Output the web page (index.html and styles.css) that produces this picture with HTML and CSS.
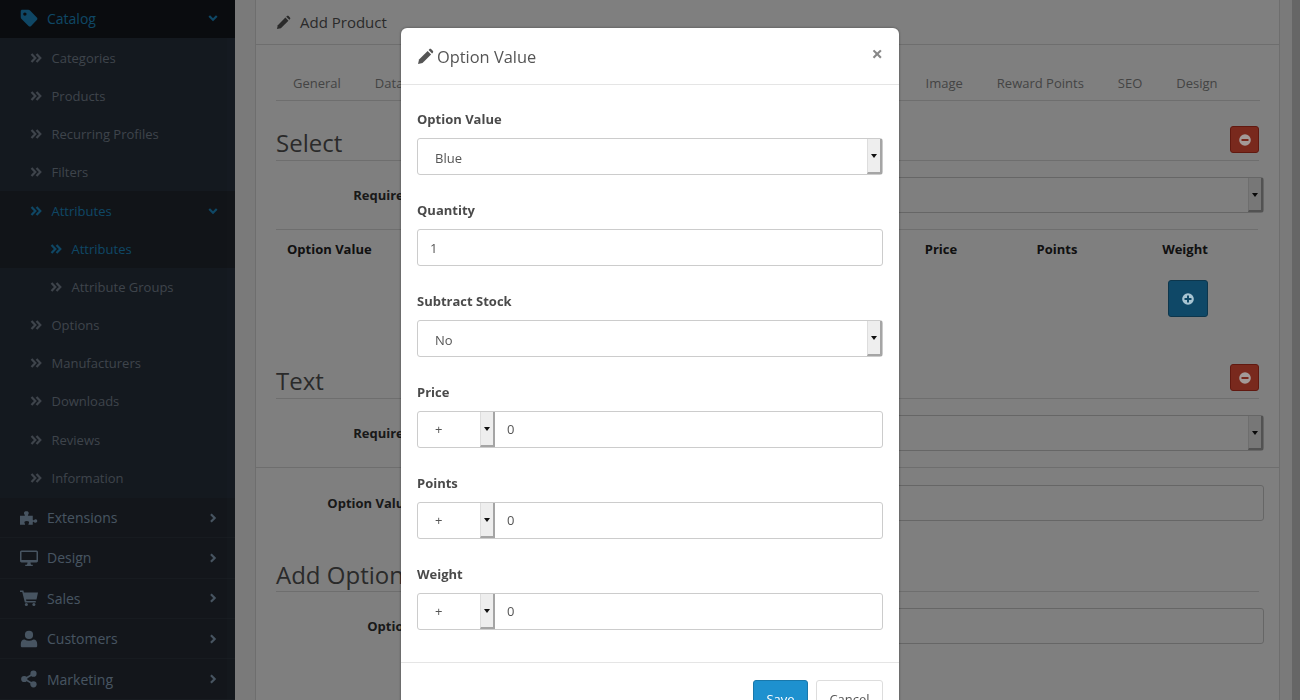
FILE: index.html
```html
<!DOCTYPE html>
<html lang="en">

<head>
    <meta charset="UTF-8">
    <title>Add Product</title>
    <link rel="stylesheet" href="styles.css">
</head>

<body>

    <!-- Icon set -->
    <svg class="icon-defs" xmlns="http://www.w3.org/2000/svg">
        <symbol id="i-tag" viewBox="0 0 24 24"><path fill-rule="evenodd" d="M3 1h8c1 0 1.700.4 2.400 1.100l9 9.300c1 1 1 2.400 0 3.400l-7.600 7.700c-1 1-2.400 1-3.400 0l-9.300-9.100C1.400 12.700 1 12 1 11V3c0-1.200.8-2 2-2zm3.500 3.500a2.300 2.300 0 1 0 0 4.600 2.300 2.300 0 0 0 0-4.600z"/></symbol>
        <symbol id="i-down" viewBox="0 0 12 12"><path d="M1.500 3.500 6 8l4.500-4.500" fill="none" stroke="currentColor" stroke-width="2.600"/></symbol>
        <symbol id="i-right" viewBox="0 0 12 12"><path d="M3.500 1.500 8 6l-4.500 4.500" fill="none" stroke="currentColor" stroke-width="2.600"/></symbol>
        <symbol id="i-double" viewBox="0 0 12 12"><path d="M1.500 2 5.300 6 1.500 10M6.500 2l3.800 4-3.800 4" fill="none" stroke="currentColor" stroke-width="2.200"/></symbol>
        <symbol id="i-puzzle" viewBox="0 0 24 20"><path d="M0 7h5.500C6.500 7 6.800 6 6 5.200 4.800 4 5 1 8.500 1s3.700 3 2.500 4.200C10.200 6 10.500 7 11.500 7H17v5c0 1 1 1.300 1.800.5 1.200-1.200 4.200-1 4.200 1.500s-3 2.700-4.200 1.500C18 14.700 17 15 17 16v3h-5c-1 0-1-1-.3-1.800.9-1.200.6-3.200-2.700-3.200s-3.600 2-2.700 3.200C7 18 7 19 6 19H0z"/></symbol>
        <symbol id="i-desktop" viewBox="0 0 24 22"><path fill-rule="evenodd" d="M2 1h20c1 0 2 1 2 2v12c0 1-1 2-2 2h-8c0 1.300.3 2.300 1 3h2v1.500H7V20h2c.7-.7 1-1.700 1-3H2c-1 0-2-1-2-2V3c0-1 1-2 2-2zm0 2v10.500h20V3z"/></symbol>
        <symbol id="i-cart" viewBox="0 0 24 22"><path d="M0 1h4.500l.7 2.500H24l-2 9.500H8l.5 2H21v2H6.500L3 3H0z"/><circle cx="8.500" cy="19.500" r="2"/><circle cx="18.500" cy="19.500" r="2"/></symbol>
        <symbol id="i-user" viewBox="0 0 20 22"><circle cx="10" cy="6" r="5"/><path d="M1 21c-.6 0-1-.4-1-1v-3c0-3 1.500-5.500 4.500-5.500 3.400 2 7.600 2 11 0 3 0 4.500 2.500 4.500 5.500v3c0 .6-.4 1-1 1z"/></symbol>
        <symbol id="i-share" viewBox="0 0 20 22"><path d="M15.500 4.500 4.500 11l11 6.500" fill="none" stroke="currentColor" stroke-width="2"/><circle cx="15.500" cy="4.500" r="3.800"/><circle cx="4.200" cy="11" r="3.800"/><circle cx="15.500" cy="17.500" r="3.800"/></symbol>
        <symbol id="i-pencil" viewBox="0 0 24 24"><path d="M1.500 22.500l1.400-6.300L15 4.100l4.900 4.900L7.800 21.100z"/><path d="M16.400 2.700l1-1c.8-.8 2-.8 2.800 0l2.100 2.100c.8.800.8 2 0 2.800l-1 1z"/></symbol>
        <symbol id="i-minus" viewBox="0 0 24 24"><path fill-rule="evenodd" d="M12 2a10 10 0 1 0 0 20 10 10 0 0 0 0-20zM6 10.300h12v3.400H6z"/></symbol>
        <symbol id="i-plus" viewBox="0 0 24 24"><path fill-rule="evenodd" d="M12 2a10 10 0 1 0 0 20 10 10 0 0 0 0-20zM10.300 6h3.400v4.300H18v3.400h-4.300V18h-3.400v-4.300H6v-3.400h4.300z"/></symbol>
    </svg>

    <!-- Sidebar -->
    <nav class="sidebar">
        <ul class="menu">
            <li class="menu-item menu-open">
                <svg class="menu-icon"><use href="#i-tag"/></svg>
                <span class="menu-text">Catalog</span>
                <svg class="menu-caret"><use href="#i-down"/></svg>
            </li>
            <li class="sub-list">
                <div class="sub-item"><svg class="sub-icon"><use href="#i-double"/></svg>Categories</div>
                <div class="sub-item"><svg class="sub-icon"><use href="#i-double"/></svg>Products</div>
                <div class="sub-item"><svg class="sub-icon"><use href="#i-double"/></svg>Recurring Profiles</div>
                <div class="sub-item"><svg class="sub-icon"><use href="#i-double"/></svg>Filters</div>
                <div class="sub-item sub-open"><svg class="sub-icon"><use href="#i-double"/></svg>Attributes<svg class="menu-caret"><use href="#i-down"/></svg></div>
                <div class="sub-item sub-open sub-deep"><svg class="sub-icon"><use href="#i-double"/></svg>Attributes</div>
                <div class="sub-item sub-deep"><svg class="sub-icon"><use href="#i-double"/></svg>Attribute Groups</div>
                <div class="sub-item"><svg class="sub-icon"><use href="#i-double"/></svg>Options</div>
                <div class="sub-item"><svg class="sub-icon"><use href="#i-double"/></svg>Manufacturers</div>
                <div class="sub-item"><svg class="sub-icon"><use href="#i-double"/></svg>Downloads</div>
                <div class="sub-item"><svg class="sub-icon"><use href="#i-double"/></svg>Reviews</div>
                <div class="sub-item"><svg class="sub-icon"><use href="#i-double"/></svg>Information</div>
            </li>
            <li class="menu-item">
                <svg class="menu-icon"><use href="#i-puzzle"/></svg>
                <span class="menu-text">Extensions</span>
                <svg class="menu-caret"><use href="#i-right"/></svg>
            </li>
            <li class="menu-item">
                <svg class="menu-icon"><use href="#i-desktop"/></svg>
                <span class="menu-text">Design</span>
                <svg class="menu-caret"><use href="#i-right"/></svg>
            </li>
            <li class="menu-item">
                <svg class="menu-icon"><use href="#i-cart"/></svg>
                <span class="menu-text">Sales</span>
                <svg class="menu-caret"><use href="#i-right"/></svg>
            </li>
            <li class="menu-item">
                <svg class="menu-icon"><use href="#i-user"/></svg>
                <span class="menu-text">Customers</span>
                <svg class="menu-caret"><use href="#i-right"/></svg>
            </li>
            <li class="menu-item">
                <svg class="menu-icon"><use href="#i-share"/></svg>
                <span class="menu-text">Marketing</span>
                <svg class="menu-caret"><use href="#i-right"/></svg>
            </li>
        </ul>
    </nav>

    <!-- Page behind the dialog -->
    <main class="content">
        <div class="panel">
            <div class="panel-heading">
                <svg class="panel-icon"><use href="#i-pencil"/></svg>
                Add Product
            </div>
            <div class="panel-body">
                <ul class="tabs">
                    <li>General</li>
                    <li>Data</li>
                    <li>Links</li>
                    <li>Attribute</li>
                    <li>Option</li>
                    <li>Recurring</li>
                    <li>Discount</li>
                    <li>Special</li>
                    <li class="tab-image">Image</li>
                    <li>Reward Points</li>
                    <li>SEO</li>
                    <li>Design</li>
                </ul>

                <h2 class="legend">Select<span class="btn-remove"><svg class="btn-icon"><use href="#i-minus"/></svg></span></h2>
                <div class="form-row">
                    <label class="row-label">Required</label>
                    <div class="field row-field"><span class="value">Yes</span><span class="arrow"></span></div>
                </div>
                <div class="value-table">
                    <span>Option Value</span>
                    <span>Quantity</span>
                    <span>Subtract Stock</span>
                    <span class="col-center">Price</span>
                    <span class="col-center">Points</span>
                    <span class="col-center">Weight</span>
                </div>
                <div class="table-actions">
                    <span class="btn-add"><svg class="btn-icon"><use href="#i-plus"/></svg></span>
                </div>

                <h2 class="legend legend-text">Text<span class="btn-remove"><svg class="btn-icon"><use href="#i-minus"/></svg></span></h2>
                <div class="form-row">
                    <label class="row-label">Required</label>
                    <div class="field row-field"><span class="value">Yes</span><span class="arrow"></span></div>
                </div>
                <div class="panel-divider"></div>
                <div class="form-row form-row-value">
                    <label class="row-label">Option Value</label>
                    <div class="field row-field"></div>
                </div>

                <h2 class="legend legend-add">Add Option</h2>
                <div class="form-row">
                    <label class="row-label">Option</label>
                    <div class="field row-field"></div>
                </div>
            </div>
        </div>
        <div class="scroll-strip"></div>
    </main>

    <!-- Dialog -->
    <div class="backdrop"></div>
    <div class="modal">
        <div class="modal-header">
            <h4 class="modal-title"><svg class="title-icon"><use href="#i-pencil"/></svg>Option Value</h4>
            <span class="modal-close">×</span>
        </div>
        <div class="modal-body">
            <div class="form-group">
                <label>Option Value</label>
                <div class="field"><span class="value value-select">Blue</span><span class="arrow"></span></div>
            </div>
            <div class="form-group">
                <label>Quantity</label>
                <div class="field"><span class="value value-input value-qty">1</span></div>
            </div>
            <div class="form-group">
                <label>Subtract Stock</label>
                <div class="field"><span class="value value-select">No</span><span class="arrow"></span></div>
            </div>
            <div class="form-group">
                <label>Price</label>
                <div class="field"><span class="prefix">+<span class="arrow"></span></span><span class="value value-input">0</span></div>
            </div>
            <div class="form-group">
                <label>Points</label>
                <div class="field"><span class="prefix">+<span class="arrow"></span></span><span class="value value-input">0</span></div>
            </div>
            <div class="form-group">
                <label>Weight</label>
                <div class="field"><span class="prefix">+<span class="arrow"></span></span><span class="value value-input">0</span></div>
            </div>
        </div>
        <div class="modal-footer">
            <button class="btn btn-save">Save</button>
            <button class="btn btn-cancel">Cancel</button>
        </div>
    </div>

</body>

</html>
```

FILE: styles.css
```css
html, body {
    height: 700px;
    margin: 0;
    overflow: hidden;
}

body {
    display: flex;
    background: #fff;
    color: #666;
    font-family: "Open Sans", sans-serif;
    font-size: 13px;
}

ul {
    margin: 0;
    padding: 0;
    list-style: none;
}

.icon-defs {
    position: absolute;
    width: 0;
    height: 0;
}

/* Sidebar */
.sidebar {
    position: relative;
    flex: none;
    width: 235px;
    background: #262d37;
}

/* Faint scrollbar track over the menu */
.sidebar::after {
    content: "";
    position: absolute;
    top: 38px;
    right: 0;
    bottom: 0;
    width: 8px;
    background: rgba(255, 255, 255, .015);
}

.menu-item {
    display: flex;
    align-items: center;
    height: 40.4px;
    box-sizing: border-box;
    padding-left: 20px;
    border-bottom: 1px solid #2e3641;
    color: #8fa9c2;
    font-size: 14px;
}

.menu-icon {
    flex: none;
    width: 18px;
    height: 18px;
    margin-right: 9px;
    fill: currentColor;
}

.menu-caret {
    width: 10px;
    height: 10px;
    margin-left: auto;
    margin-right: 17px;
    color: #8fa9c2;
}

.menu-open {
    height: 38px;
    padding-bottom: 2px;
    border-bottom: 0;
    background: #15191f;
    color: #1e8fca;
}

.menu-open .menu-caret,
.sub-open .menu-caret {
    color: #1e8fca;
}

.sub-list {
    padding: .7px 0 .9px;
    background: #28323f;
}

.sub-item {
    display: flex;
    align-items: center;
    height: 38.2px;
    padding-left: 30px;
    color: #7d8896;
}

.sub-icon {
    flex: none;
    width: 12px;
    height: 12px;
    margin-right: 9.500px;
    color: #7d8896;
}

.sub-deep {
    padding-left: 50px;
}

.sub-open,
.sub-open .sub-icon {
    background: #222830;
    color: #1e8fca;
}

.sub-open .sub-icon {
    background: none;
}

/* Page behind the dialog */
.content {
    display: flex;
    flex: 1;
    padding-left: 20px;
    background: #f5f5f5;
}

.panel {
    width: 1025px;
    box-sizing: border-box;
    border-left: 1px solid #ddd;
    border-right: 1px solid #ddd;
    background: #fff;
}

.scroll-strip {
    width: 8px;
    margin-left: 12px;
    background: #ccc;
}

.panel-heading {
    display: flex;
    align-items: center;
    height: 45px;
    box-sizing: border-box;
    padding-left: 20px;
    border-bottom: 1px solid #ddd;
    color: #555;
    font-size: 15px;
}

.panel-icon {
    width: 15px;
    height: 15px;
    margin-right: 9px;
    fill: currentColor;
}

.panel-body {
    padding: 21px 20px 0;
}

.tabs {
    display: flex;
    gap: 34px;
    height: 34px;
    margin-right: -1px;
    padding-left: 17px;
    border-bottom: 1px solid #ddd;
    color: #888;
    line-height: 34px;
}

.tab-image {
    margin-left: 3px;
}

.legend {
    display: flex;
    justify-content: space-between;
    height: 40px;
    margin: 19px 0 0;
    border-bottom: 1px solid #ddd;
    color: #555;
    font-size: 24px;
    font-weight: 400;
    line-height: 46px;
}

.legend-text {
    margin-top: 41px;
}

.legend-add {
    margin-top: 30px;
    line-height: 48px;
}

.btn-remove {
    display: flex;
    align-items: center;
    justify-content: center;
    width: 29px;
    height: 27px;
    margin-top: 6px;
    box-sizing: border-box;
    border: 1px solid #c23321;
    border-radius: 3px;
    background: #f3533b;
}

/* These glyphs stay bright above the backdrop in the reference */
.btn-icon {
    position: relative;
    z-index: 1;
    width: 14px;
    height: 14px;
    fill: #a39a98;
}

.btn-add .btn-icon {
    fill: #a8c4d2;
}

.form-row {
    display: flex;
    align-items: center;
    gap: 16px;
    margin-top: 16px;
    margin-right: -5px;
}

.form-row-value {
    margin-top: 17px;
}

.row-label {
    flex: none;
    width: 136px;
    color: #333;
    font-weight: 700;
    text-align: right;
}

.value-table {
    display: grid;
    grid-template-columns: 220px 220px 190px 48px 184px 72px;
    height: 40px;
    margin-top: 16px;
    margin-right: 1px;
    padding-left: 11px;
    box-sizing: border-box;
    border-top: 1px solid #ddd;
    color: #222;
    font-weight: 700;
    line-height: 38px;
}

.col-center {
    text-align: center;
}

.table-actions {
    display: flex;
    justify-content: flex-end;
    height: 37px;
    margin-top: 11px;
    padding-right: 51px;
}

.btn-add {
    display: flex;
    align-items: center;
    justify-content: center;
    width: 40px;
    height: 37px;
    box-sizing: border-box;
    border: 1px solid #1a6d99;
    border-radius: 3px;
    background: #1e91cf;
}

.panel-divider {
    height: 1px;
    margin: 16px -20px 0;
    background: #ddd;
}

/* Dialog */
.backdrop {
    position: fixed;
    inset: 0;
    background: rgba(0, 0, 0, .5);
}

.modal {
    position: fixed;
    z-index: 2;
    top: 28px;
    left: 401px;
    width: 498px;
    box-sizing: border-box;
    border-radius: 6px;
    background: #fff;
    box-shadow: 0 0 3px rgba(0, 0, 0, .4);
}

.modal-header {
    display: flex;
    align-items: center;
    justify-content: space-between;
    height: 57px;
    box-sizing: border-box;
    padding: 1px 16px 0;
    border-bottom: 1px solid #e5e5e5;
}

.modal-title {
    display: flex;
    align-items: center;
    margin: 0;
    color: #555;
    font-size: 16.400px;
    font-weight: 400;
}

.title-icon {
    width: 17px;
    height: 17px;
    margin-right: 3px;
    fill: currentColor;
}

.modal-close {
    position: relative;
    top: -3px;
    color: #888;
    font-size: 20px;
    font-weight: 700;
    line-height: 20px;
}

.modal-body {
    padding: 25px 16px 6px;
}

.form-group {
    margin-bottom: 26px;
}

.form-group label {
    display: block;
    height: 18px;
    margin-bottom: 10px;
    color: #4a4a4a;
    font-weight: 700;
    line-height: 18px;
}

.field {
    display: flex;
    align-items: stretch;
    height: 37px;
    box-sizing: border-box;
    border: 1px solid #ccc;
    border-radius: 3px;
    background: #fff;
    color: #555;
    line-height: 35px;
}

.row-field {
    flex: 1;
    height: 36px;
    line-height: 34px;
}

.value {
    flex: 1;
    padding-left: 17px;
}

.value-select {
    padding-top: 2px;
}

.value-input {
    padding-left: 12px;
}

.value-qty {
    padding-top: 1px;
}

.prefix {
    display: flex;
    justify-content: space-between;
    width: 77px;
    box-sizing: border-box;
    padding-left: 17px;
}

/* Old style select button */
.arrow {
    position: relative;
    flex: none;
    width: 15px;
    box-sizing: border-box;
    border-left: 1px solid #ddd;
    border-right: 2px solid #a5a5a5;
    border-bottom: 2px solid #a5a5a5;
    background: #eee;
}

.arrow::after {
    content: "";
    position: absolute;
    top: 15px;
    left: 3px;
    border: 3px solid transparent;
    border-top: 4px solid #111;
    border-bottom: 0;
}

.modal-footer {
    display: flex;
    justify-content: flex-end;
    gap: 8px;
    padding: 17px 16px;
    border-top: 1px solid #e5e5e5;
}

.btn {
    height: 37px;
    border-radius: 3px;
    font-family: "Open Sans", sans-serif;
    font-size: 13px;
}

.btn-save {
    width: 55px;
    border: 1px solid #1978ab;
    background: #1e91cf;
    color: #fff;
}

.btn-cancel {
    width: 67px;
    border: 1px solid #ddd;
    background: #fff;
    color: #555;
}
```
